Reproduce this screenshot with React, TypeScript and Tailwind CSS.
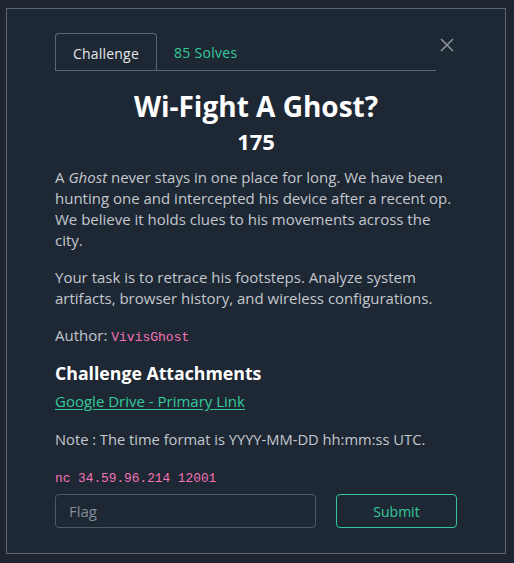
import React from "react";

export default function App() {
  return (
    <div className="w-[514px] h-[563px] bg-[#1c2530] pt-[8px] pl-[6px] overflow-hidden" style={{ fontFamily: "'Open Sans', 'Liberation Sans', sans-serif" }}>
      <div className="w-[500px] h-[546px] border border-[#5d6672] bg-[#1e2834] px-12 pt-6 pb-6 flex flex-col">
        <div className="flex items-start">
          <div className="flex-1 flex border-b border-[#5d6672] h-[38px]">
            <div className="w-[102px] h-[38px] border border-b-0 border-[#5d6672] rounded-t-[4px] flex items-center justify-center pt-[2px] text-[14px] text-[#e5e7eb] tracking-[0.2px]">
              Challenge
            </div>
            <div className="px-[17px] flex items-center pt-[2px] text-[14px] text-[#34c99a] tracking-[0.3px]">85 Solves</div>
          </div>
          <button className="w-[21px] h-[21px] flex items-center justify-center mt-[1px]">
            <svg width="14" height="14" viewBox="0 0 14 14" fill="none" stroke="#8b929c" strokeWidth="1.6">
              <path d="M1 1L13 13M13 1L1 13" />
            </svg>
          </button>
        </div>
        <h1 className="text-center text-white font-bold text-[28px] leading-[34px] mt-[18px]">Wi-Fight A Ghost?</h1>
        <div className="text-center text-white font-bold text-[22px] leading-[28px] mt-[4px]">175</div>
        <div className="mt-[12px] text-[15px] leading-[21px] text-[#c3c7ce]">
          <p>
            A <em>Ghost</em> never stays in one place for long. We have been hunting one and intercepted his device after a recent op. We believe it holds clues to his movements across the city.
          </p>
          <p className="mt-[16px]">
            Your task is to retrace his footsteps. Analyze system artifacts, browser history, and wireless configurations.
          </p>
          <p className="mt-[16px]">
            Author: <span className="text-[#f472b6] text-[13px]" style={{ fontFamily: "'Liberation Mono', monospace" }}>VivisGhost</span>
          </p>
        </div>
        <h2 className="mt-[13px] text-[17.7px] leading-[24px] font-bold text-white">Challenge Attachments</h2>
        <a className="mt-[6px] text-[15px] leading-[20px] text-[#34c99a] underline underline-offset-2 self-start">Google Drive - Primary Link</a>
        <div className="mt-[18px] text-[14.7px] leading-[20px] text-[#c3c7ce]">Note : The time format is YYYY-MM-DD hh:mm:ss UTC.</div>
        <div className="mt-[22px] text-[12.8px] leading-[16px] text-[#f472b6]" style={{ fontFamily: "'Liberation Mono', monospace" }}>nc 34.59.96.214 12001</div>
        <div className="mt-[7px] flex gap-[20px]">
          <div className="w-[261px] h-[34px] border border-[#4f5864] rounded-[4px] flex items-center pl-[13px] text-[15px] text-[#858c96]">Flag</div>
          <button className="flex-1 h-[34px] border border-[#34c99a] rounded-[4px] text-[14px] text-[#34c99a]">Submit</button>
        </div>
      </div>
    </div>
  );
}
